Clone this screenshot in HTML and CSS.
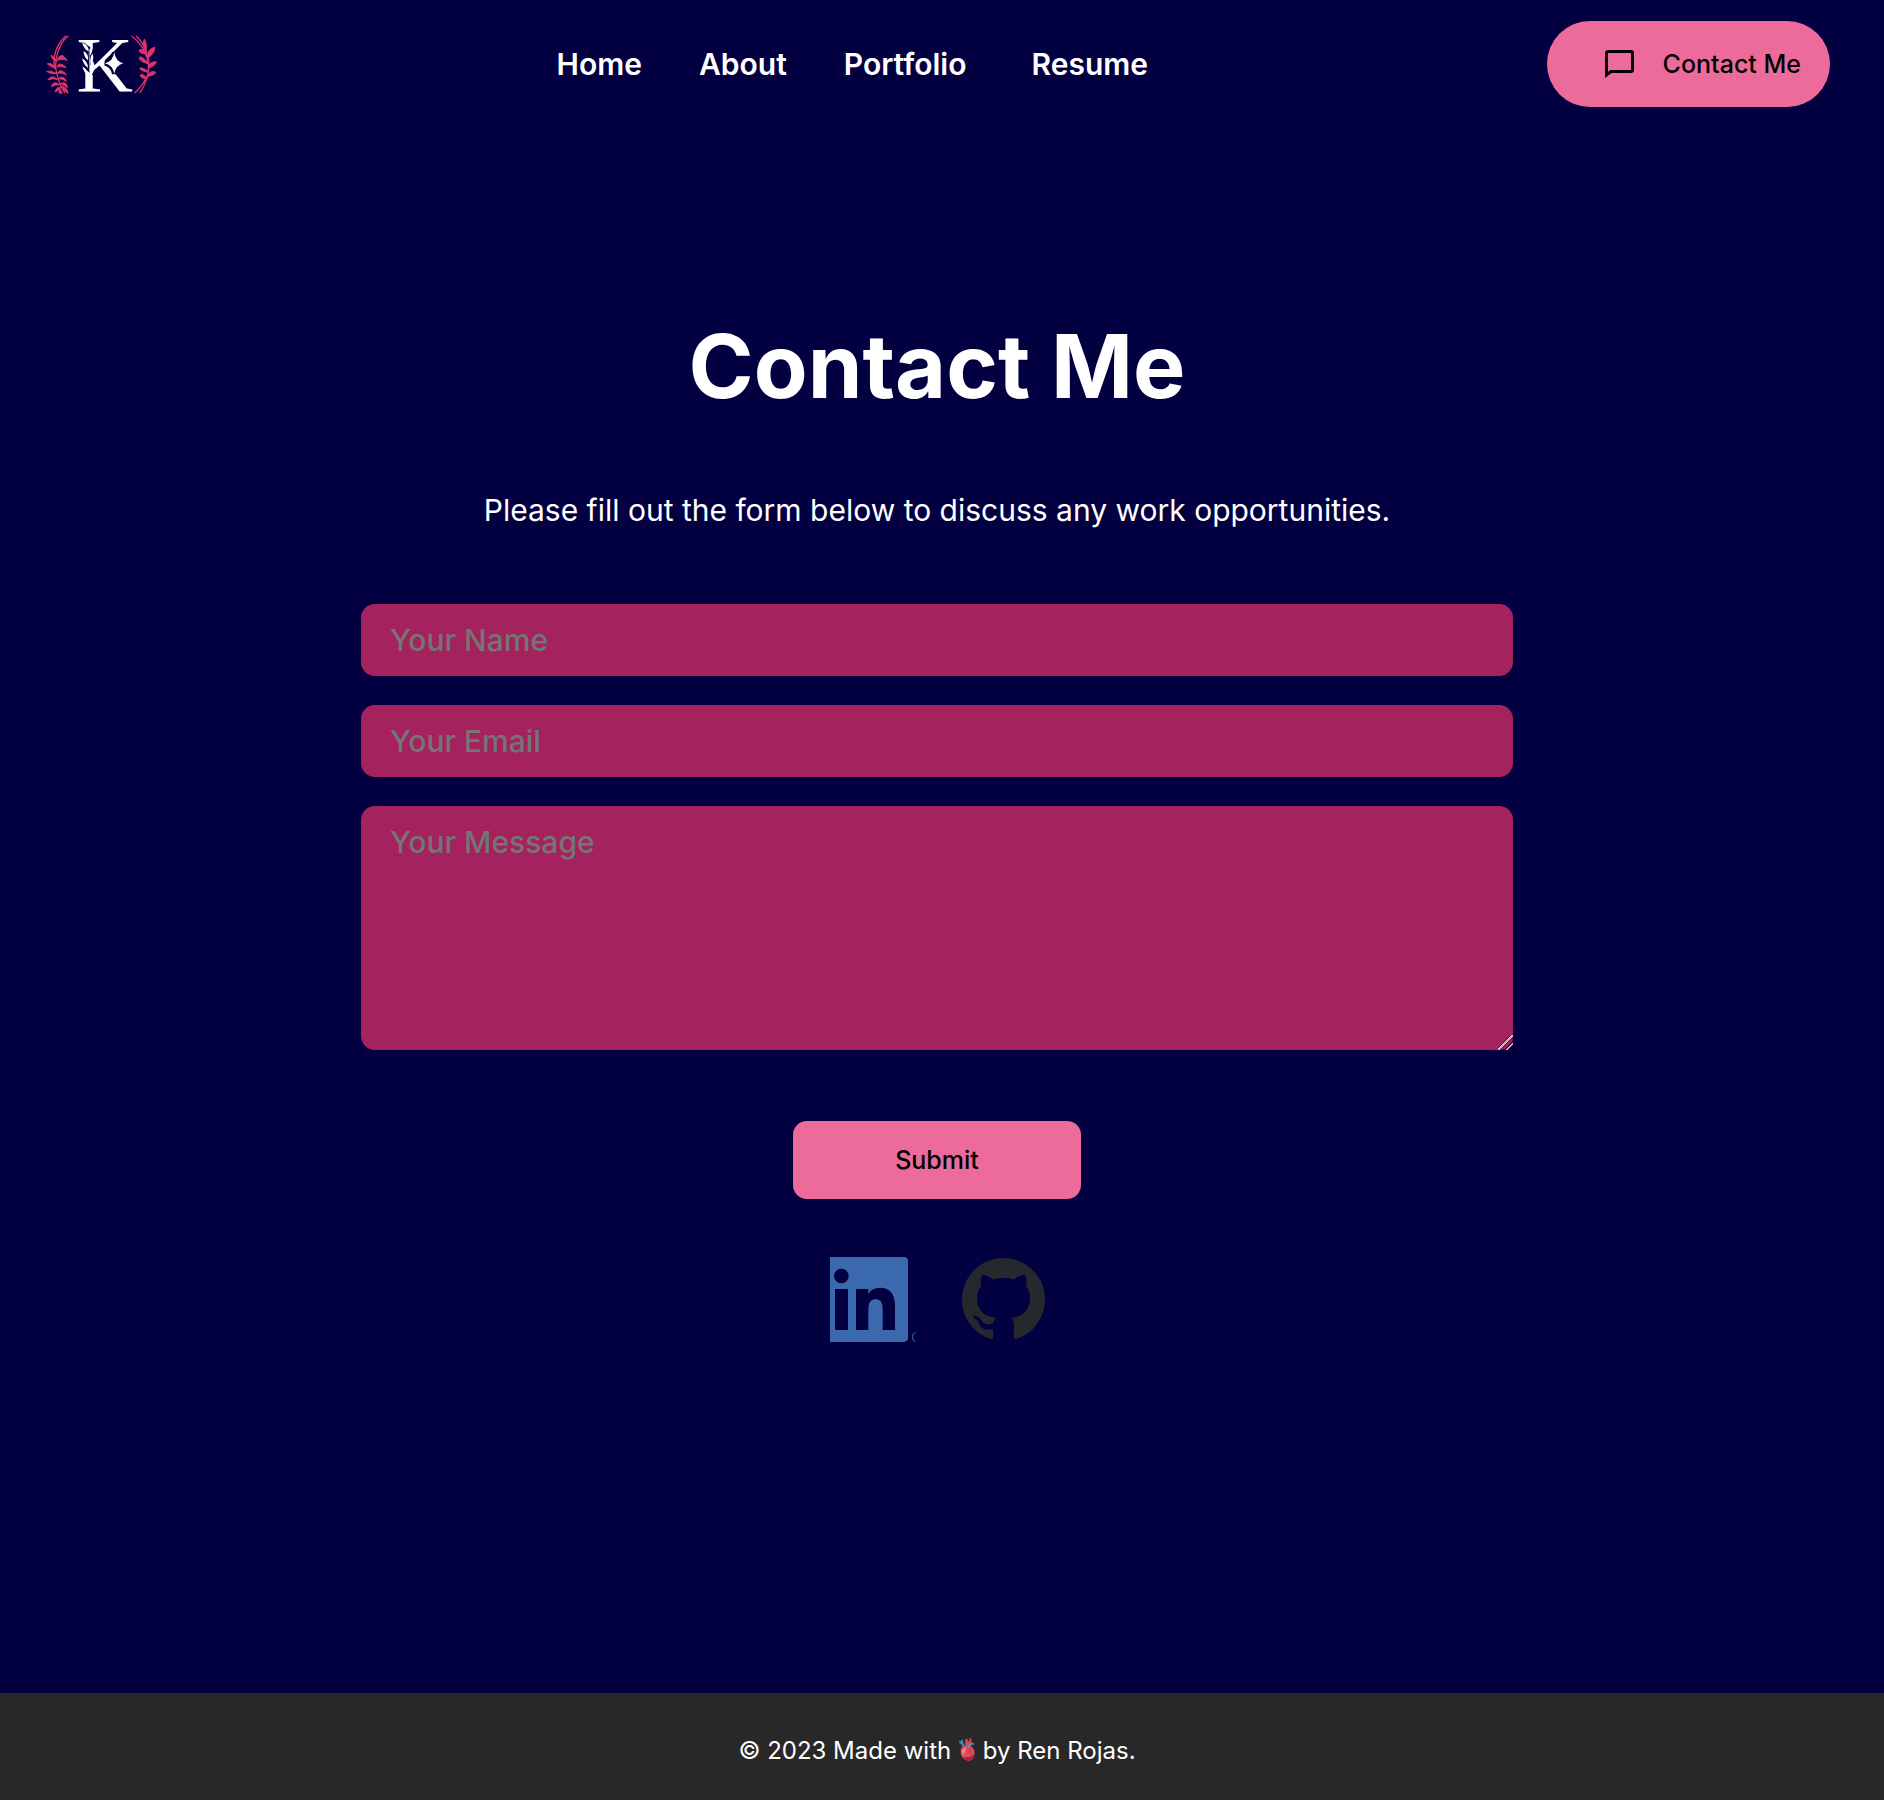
FILE: index.html
```html
<!DOCTYPE html>
<html lang="en">
<head>
<meta charset="utf-8">
<meta name="viewport" content="width=device-width, initial-scale=1">
<title>Contact Me | Ren Rojas</title>
<link rel="stylesheet" href="styles.css">
</head>
<body>
<header class="header">
  <a class="logo" href="#" aria-label="Ren Rojas home">
    <svg class="logo-mark" viewBox="48 40 336 184" aria-hidden="true">
      <g class="logo-leaves">
        <path class="logo-stem" d="M115 45C82 70 70 128 80 160Q87 192 104 218M107 45C78 73 67 110 73 145"/>
        <path d="M80 122Q67 103 62 105Q65 119 80 122ZM82 119Q83 105 98 105L111 119Q96 114 82 119ZM77 141Q61 125 51 130Q62 142 77 141ZM80 139Q87 121 108 141Q93 137 80 139ZM79 159Q62 148 49 153Q61 162 79 159ZM81 158Q91 141 109 163Q94 156 81 158ZM82 177Q64 161 53 178Q69 173 82 177ZM84 174Q101 163 109 183Q96 175 84 174ZM88 193Q70 179 63 199Q76 192 88 193ZM91 190Q108 180 112 202Q101 194 91 190ZM91 199Q77 202 74 214Q87 213 91 199ZM95 198Q111 201 114 219Q99 213 95 198ZM88 203L96 218L87 219Z"/>
        <path class="logo-stem" d="M305 46C342 73 363 120 354 162Q343 191 315 218M319 46C349 74 365 119 354 164Q346 195 330 218"/>
        <path d="M344 87Q335 71 344 55Q353 70 349 91ZM350 96Q329 79 328 92Q334 100 351 101ZM354 112Q352 84 375 80Q375 100 354 112ZM354 126Q330 100 328 114Q335 125 354 130ZM356 142Q357 123 380 124Q376 138 356 142ZM353 151Q331 137 330 145Q337 153 353 155ZM354 164Q364 147 379 156Q370 166 354 168ZM351 173Q334 154 331 167Q336 173 351 176Z"/>
      </g>
      <text class="logo-letter" x="139" y="211">K</text>
      <path class="logo-cut" d="M163 67L190 87V165L163 145Z"/>
      <path class="logo-star" d="M253 95Q257 123 280 128Q257 134 253 160Q249 134 225 128Q249 123 253 95Z"/>
      <path class="logo-sprig" d="M156 67Q174 69 176 92Q163 88 156 67ZM184 72Q192 89 180 105Q177 88 184 72ZM160 91Q177 101 174 119Q162 111 160 91ZM187 99Q195 116 181 131Q178 113 187 99ZM156 113Q174 124 174 142Q160 133 156 113ZM185 122Q194 141 180 155Q176 139 185 122ZM157 137Q173 148 175 164Q161 158 157 137ZM188 119L195 138Q191 158 180 169Q177 149 188 119Z"/>
      <path class="logo-vein" d="M177 84L180 175"/>
    </svg>
  </a>
  <nav class="nav" aria-label="Main">
    <a class="nav-link" href="#">Home</a>
    <a class="nav-link" href="#">About</a>
    <a class="nav-link" href="#">Portfolio</a>
    <a class="nav-link nav-link-last" href="#">Resume</a>
  </nav>
  <a class="contact-button" href="#contact">
    <svg class="contact-icon" viewBox="0 0 29 28" aria-hidden="true"><path d="M3 1.500H26A1.500 1.500 0 0 1 27.500 3V20A1.500 1.500 0 0 1 26 21.500H6L1.500 25V3A1.500 1.500 0 0 1 3 1.500Z"/></svg>
    Contact Me
  </a>
</header>

<main class="main" id="contact">
  <h1 class="title">Contact Me</h1>
  <p class="intro">Please fill out the form below to discuss any work opportunities.</p>
  <form class="form">
    <input class="field" type="text" name="name" placeholder="Your Name" aria-label="Your Name">
    <input class="field" type="email" name="email" placeholder="Your Email" aria-label="Your Email">
    <textarea class="field message" name="message" placeholder="Your Message" aria-label="Your Message"></textarea>
    <button class="submit" type="submit">Submit</button>
  </form>
  <div class="social">
    <a class="social-link" href="#" aria-label="LinkedIn">
      <svg class="linkedin" viewBox="87 51 258 255" aria-hidden="true">
        <path fill-rule="evenodd" d="M87 51H309Q321 52 321 63V295Q320 305 309 306H87ZM121 86A22 22 0 1 0 121 130A22 22 0 1 0 121 86ZM102 147V270H141V147ZM165 147V270H202V205Q202 178 224 177Q245 177 245 207V270H282V198Q282 144 237 143Q211 144 202 162V147Z"/>
        <path class="linkedin-mark" d="M344 277Q334 279 334 291T344 306"/>
      </svg>
    </a>
    <a class="social-link" href="#" aria-label="GitHub">
      <svg class="github" viewBox="0 0 16 16" aria-hidden="true"><path d="M8 0C3.580 0 0 3.580 0 8c0 3.540 2.290 6.530 5.470 7.590.4.070.55-.17.55-.38 0-.19-.01-.82-.01-1.490-2.010.37-2.530-.49-2.690-.94-.09-.23-.48-.94-.82-1.130-.28-.15-.68-.52-.01-.53.63-.01 1.080.58 1.230.82.72 1.210 1.870.87 2.330.66.07-.52.28-.87.51-1.070-1.780-.2-3.640-.89-3.640-3.950 0-.87.31-1.590.82-2.150-.08-.2-.36-1.020.08-2.120 0 0 .67-.21 2.200.82.64-.18 1.320-.27 2-.27.68 0 1.360.09 2 .27 1.530-1.040 2.200-.82 2.200-.82.44 1.100.16 1.920.08 2.120.51.56.82 1.270.82 2.150 0 3.070-1.870 3.750-3.650 3.950.29.25.54.73.54 1.480 0 1.070-.01 1.930-.01 2.200 0 .21.15.46.55.38A8.013 8.013 0 0 0 16 8c0-4.420-3.580-8-8-8z"/></svg>
    </a>
  </div>
</main>

<footer class="footer">
  <p class="credit">© 2023 Made with
    <svg class="heart" viewBox="0 0 48 70" role="img" aria-label="love">
      <path fill="#3d83c8" d="M0 7l5 4 1-6 6 1 1 10 6 11-7 6-5-13-6-4z"/>
      <path fill="#df4453" d="M19 4l6-2 2 8 5-1-1-8 5-1 2 10-2 15-18 5z"/>
      <path fill="#e24b57" d="M5 32Q19 16 37 25Q51 36 46 54Q40 71 27 69Q10 66 5 48Z"/>
      <path fill="#ee858b" d="M8 38Q15 27 23 31Q21 48 13 54Q7 48 8 38Z"/>
      <path fill="#b51d36" d="M14 56Q34 64 46 47Q44 66 31 69Q20 69 14 56Z"/>
      <path fill="#4897d4" d="M43 14L46 20Q31 21 30 31L23 29Q27 17 43 14Z"/>
      <path fill="none" stroke="#b52a43" stroke-width="2" d="M24 31Q20 44 12 51M31 31Q38 43 37 57M33 38L25 47"/>
    </svg>
    by Ren Rojas.</p>
</footer>
</body>
</html>
```

FILE: styles.css
```css
:root {
  --navy: #030041;
  --pink: #ed6b9b;
  --berry: #a4225d;
  --charcoal: #282828;
}

* {
  box-sizing: border-box;
}

body {
  display: flex;
  flex-direction: column;
  min-height: 100vh;
  margin: 0;
  background: var(--navy);
  color: #fff;
  font-family: Inter, "Liberation Sans", sans-serif;
}

a {
  color: inherit;
  text-decoration: none;
}

svg {
  display: block;
}

.header {
  display: flex;
  align-items: center;
  justify-content: space-between;
  padding: 21px 54px 21px 46px;
}

.logo-mark {
  width: 112px;
  height: 61px;
  overflow: visible;
}

.logo-leaves {
  fill: #dc3468;
  stroke: #dc3468;
  stroke-width: 3;
}

.logo-stem {
  fill: none;
  stroke-width: 4;
}

.logo-letter {
  fill: #fff;
  font-family: "Liberation Serif", serif;
  font-size: 236px;
}

.logo-cut {
  fill: var(--navy);
}

.logo-star {
  fill: #fff;
  stroke: var(--navy);
  stroke-width: 14;
  paint-order: stroke;
}

.logo-sprig {
  fill: #fff;
}

.logo-vein {
  stroke: #fff;
  stroke-width: 2;
}

.nav {
  display: flex;
  gap: 57px;
  font-size: 30px;
  font-weight: 600;
  line-height: 44px;
}

.nav-link-last {
  padding-left: 8px;
}

.contact-button {
  display: flex;
  align-items: center;
  gap: 29px;
  height: 86px;
  padding: 0 29px 0 58px;
  border-radius: 43px;
  background: var(--pink);
  color: #000;
  font-size: 25px;
  font-weight: 500;
}

.contact-icon {
  width: 29px;
  height: 28px;
  fill: none;
  stroke: #000;
  stroke-width: 3;
}

.main {
  display: flex;
  flex: 1;
  flex-direction: column;
  align-items: center;
  padding: 174px 10px 96px 0;
}

.title {
  margin: 0;
  font-size: 88px;
  font-weight: 700;
  line-height: 128px;
  text-align: center;
}

.intro {
  margin: 58px 0 72px;
  font-size: 30px;
  line-height: 44px;
  text-align: center;
}

.form {
  display: flex;
  flex-direction: column;
  gap: 29px;
  width: 100%;
  max-width: 1152px;
}

.field {
  width: 100%;
  height: 72px;
  padding: 14px 29px;
  border: 0;
  border-radius: 14px;
  background: var(--berry);
  color: #fff;
  font: 500 30px/44px Inter, "Liberation Sans", sans-serif;
}

.field::placeholder {
  color: #757575;
}

.message {
  display: block;
  height: 244px;
  resize: vertical;
}

.message::-webkit-resizer {
  background: linear-gradient(135deg, transparent 41%, #500f35 41% 46%, #d9b3c6 46% 54%, #500f35 54% 58%, transparent 58% 69%, #500f35 69% 74%, #d9b3c6 74% 82%, transparent 82%);
}

.submit {
  align-self: center;
  width: 288px;
  height: 78px;
  margin-top: 42px;
  border: 0;
  border-radius: 14px;
  background: var(--pink);
  color: #000;
  font: 500 25px/36px Inter, "Liberation Sans", sans-serif;
}

.social {
  display: flex;
  align-items: center;
  gap: 46px;
  margin-top: 58px;
}

.linkedin {
  width: 86px;
  height: 85px;
  fill: #3a69ad;
}

.linkedin-mark {
  fill: none;
  stroke: #3a69ad;
  stroke-width: 3;
}

.github {
  width: 83px;
  height: 83px;
  fill: #24292e;
}

.footer {
  padding: 40px 10px 31px 0;
  background: var(--charcoal);
}

.credit {
  margin: 0;
  font-size: 24px;
  line-height: 36px;
  text-align: center;
}

.heart {
  display: inline-block;
  width: 16px;
  height: 23px;
  margin: 0 1px;
  vertical-align: -2px;
}
```
